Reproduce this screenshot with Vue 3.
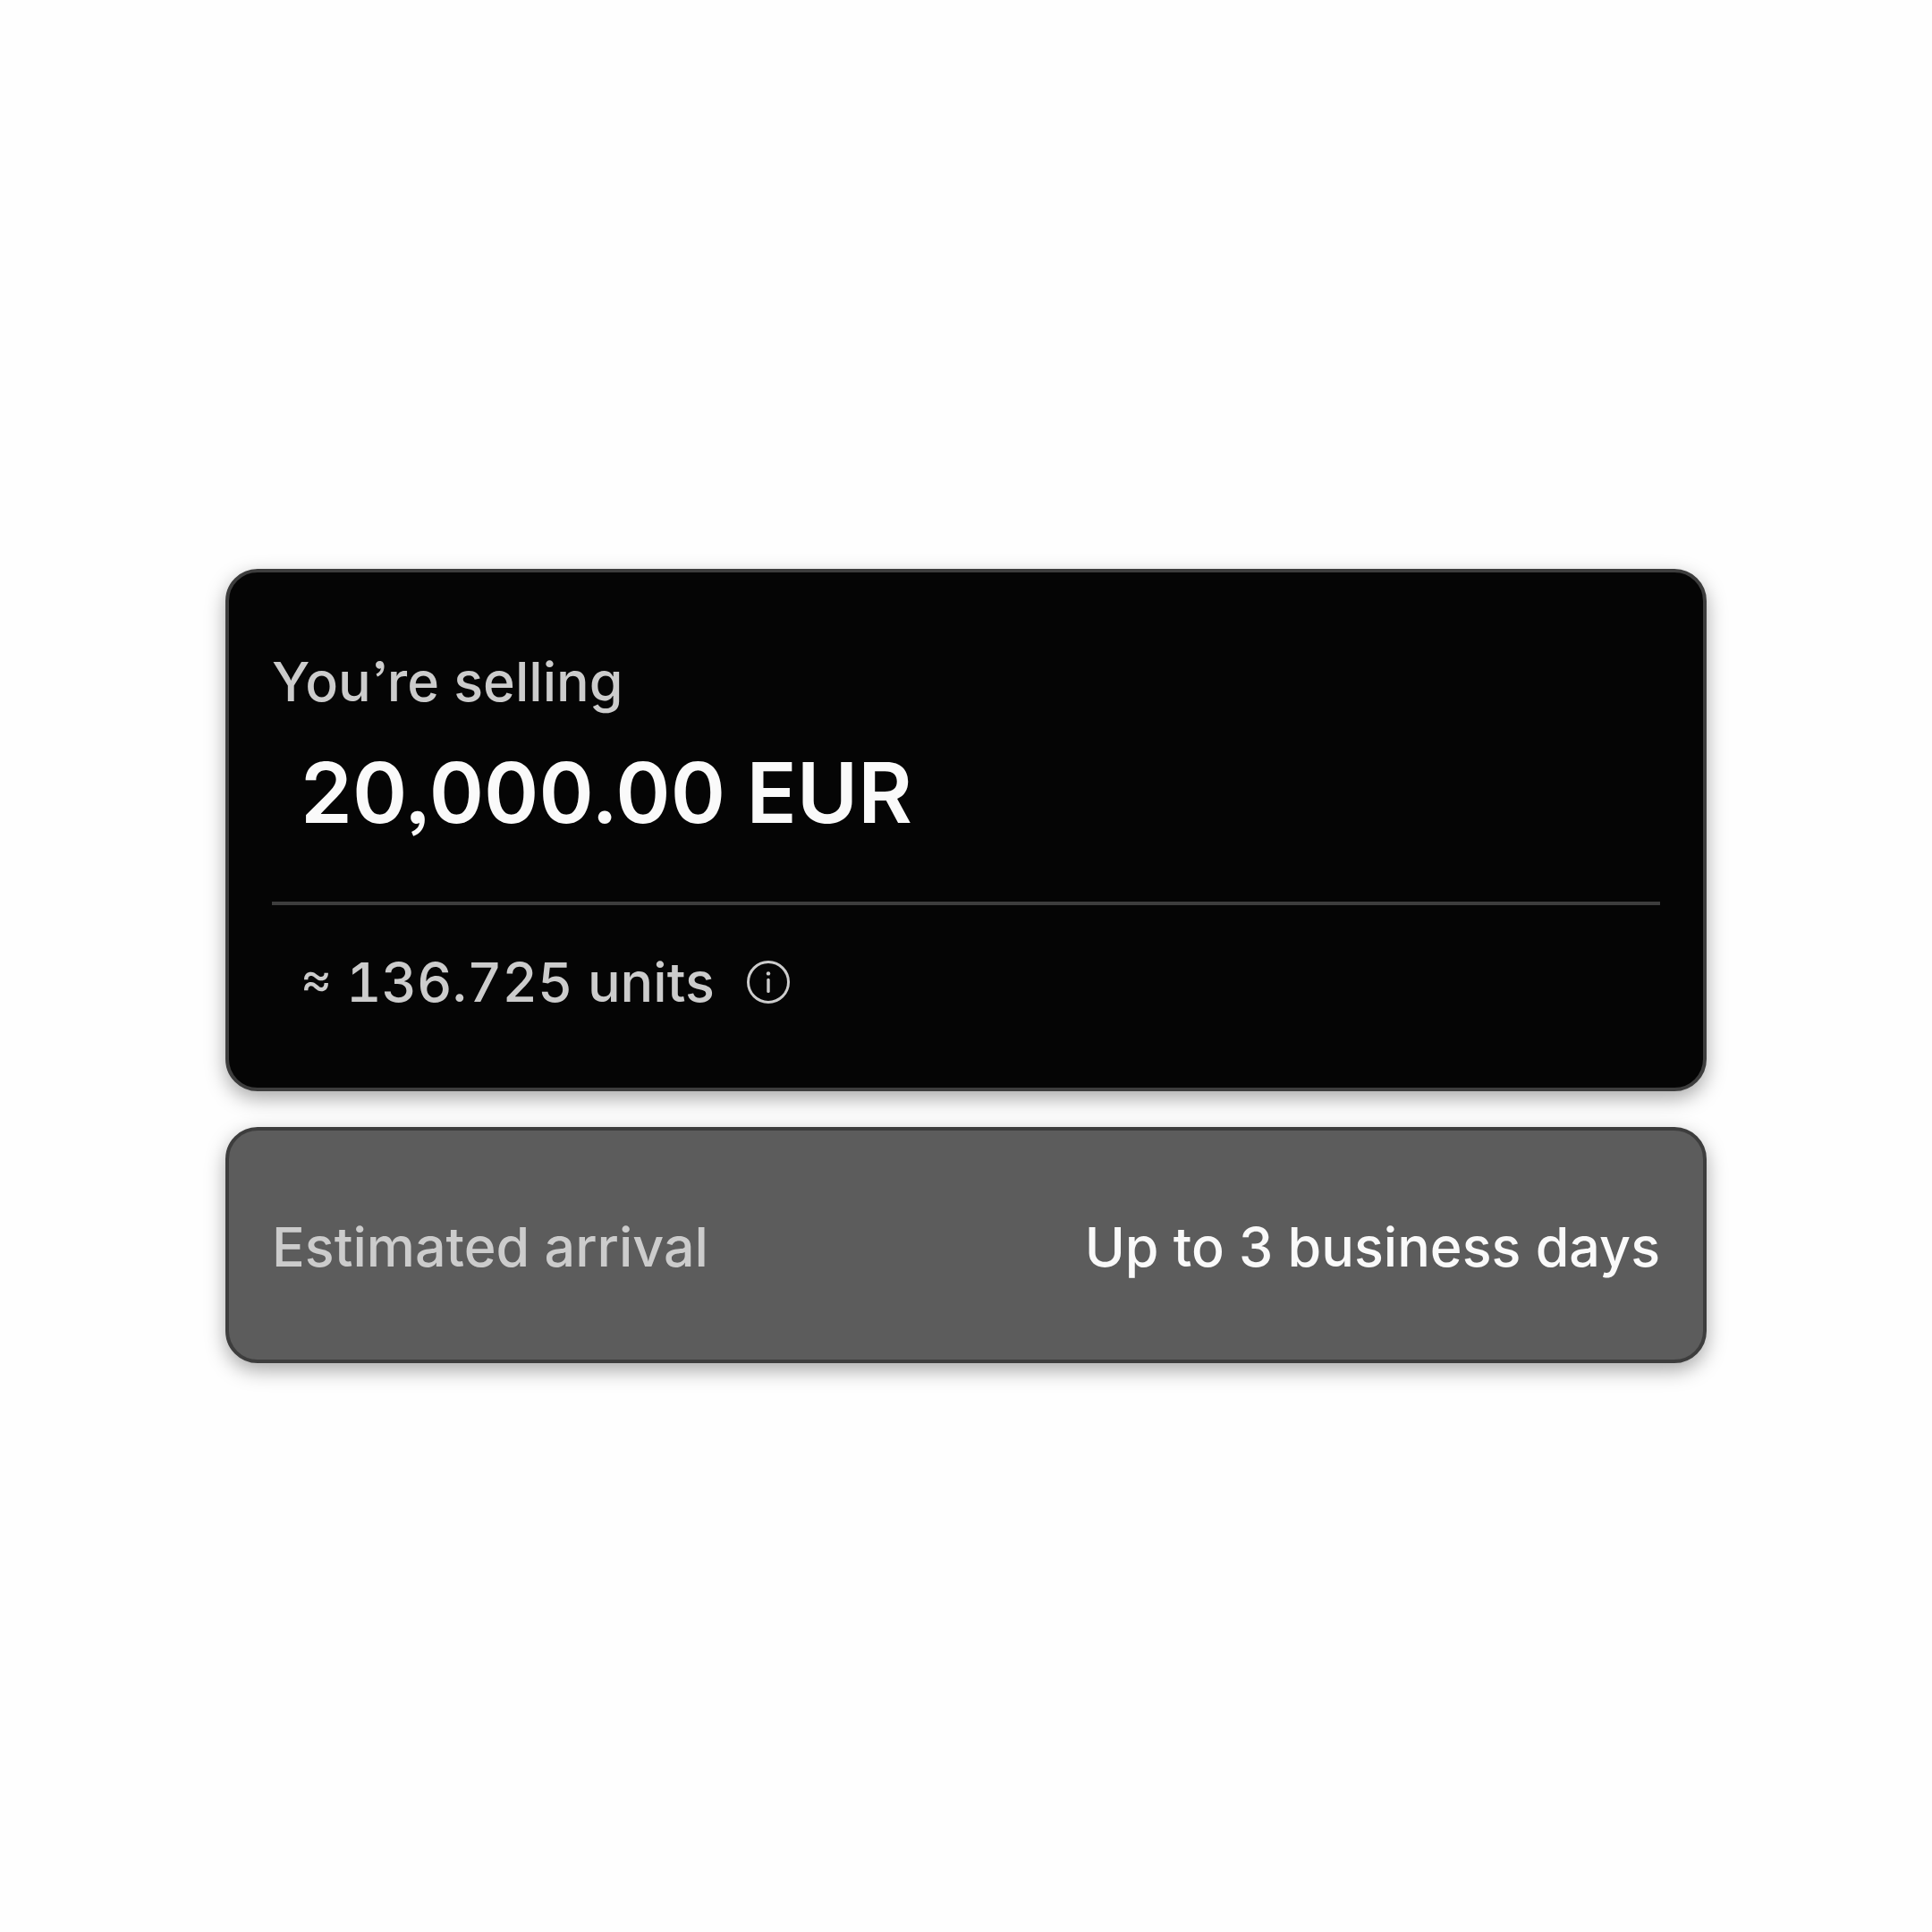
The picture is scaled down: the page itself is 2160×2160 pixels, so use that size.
<template>
  <main class="page">
    <section class="card card-dark">
      <h2 class="label">You’re selling</h2>
      <p class="amount">{{ order.amount }} {{ order.currency }}</p>
      <hr class="divider" />
      <div class="units">
        <span class="approx">≈</span>
        <span>{{ order.units }} units</span>
        <button type="button" class="info" aria-label="About units">
          <svg viewBox="0 0 48 48" fill="none" aria-hidden="true">
            <circle cx="24" cy="24" r="22.5" stroke="currentColor" stroke-width="3" />
            <circle cx="24" cy="14.4" r="2.2" fill="currentColor" />
            <path d="M24 21.4v13" stroke="currentColor" stroke-width="3.4" stroke-linecap="round" />
          </svg>
        </button>
      </div>
    </section>

    <section class="card card-grey">
      <span class="label">Estimated arrival</span>
      <span class="value">{{ order.arrival }}</span>
    </section>
  </main>
</template>

<script setup>
import { reactive } from 'vue';

const order = reactive({
  amount: '20,000.00',
  currency: 'EUR',
  units: '136.725',
  arrival: 'Up to 3 business days',
});
</script>

<style>
body {
  background: #fefefe;
}
</style>

<style scoped>
.page {
  box-sizing: border-box;
  min-height: 100vh;
  display: flex;
  flex-direction: column;
  justify-content: center;
  gap: 40px;
  max-width: 1656px;
  margin: 0 auto;
  font-family: Inter, 'Liberation Sans', sans-serif;
  /* round quotes and commas */
  font-feature-settings: 'ss03';
  font-size: 61px;
  font-weight: 500;
  line-height: 80px;
  color: #cccccc;
}

.card {
  border: 4px solid #3d3d3d;
  border-radius: 36px;
  box-shadow: 0 8px 22px rgba(0, 0, 0, 0.34);
}

.card-dark {
  padding: 82px 48px 78px;
  background: #050505;
}

.card-grey {
  display: flex;
  justify-content: space-between;
  align-items: center;
  padding: 90px 48px 86px;
  background: #5c5c5c;
}

.label {
  margin: 0;
  font-size: inherit;
  font-weight: inherit;
}

.amount {
  margin: 28px 0 0;
  padding: 0 32px;
  font-size: 93px;
  font-weight: 600;
  line-height: 112px;
  color: #fafafa;
}

.divider {
  height: 4px;
  margin: 66px 0 46px;
  border: none;
  background: #3d3d3d;
}

.units {
  display: flex;
  align-items: center;
  gap: 16px;
  padding: 0 32px;
  font-variant-numeric: tabular-nums;
}

.approx {
  font-size: 54px;
  font-weight: 400;
  font-feature-settings: 'case';
}

.info {
  width: 48px;
  height: 48px;
  margin-left: 20px;
  padding: 0;
  border: none;
  background: none;
  color: inherit;
  cursor: pointer;
}

.info svg {
  display: block;
  width: 100%;
  height: 100%;
}

.value {
  color: #fafafa;
}
</style>
